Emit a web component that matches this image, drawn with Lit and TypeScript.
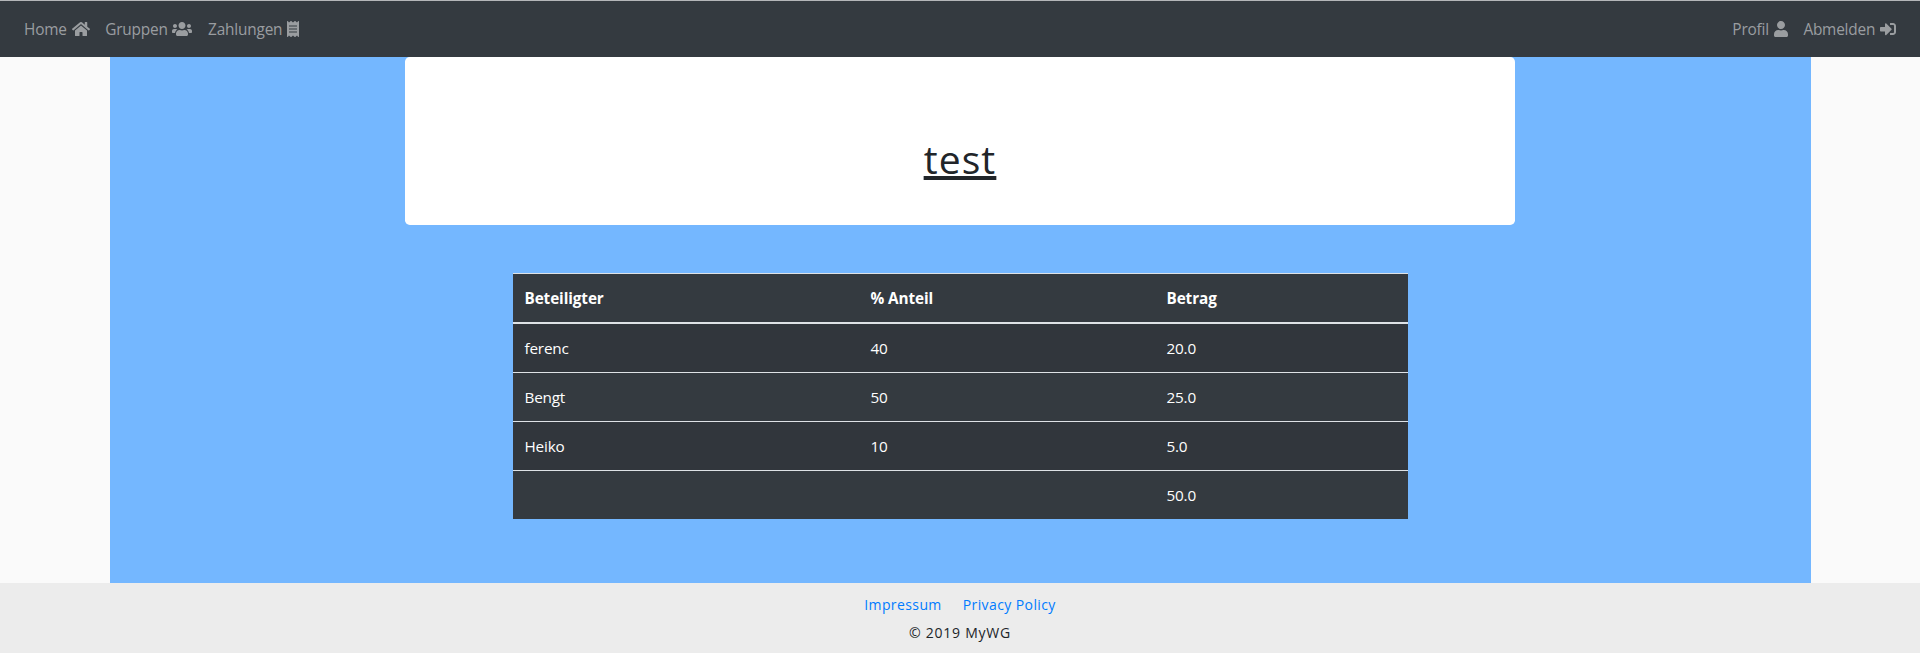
import { LitElement, html, css, svg } from "lit";
import { customElement } from "lit/decorators.js";

const ICONS: Record<string, { w: number; d: string }> = {
  home: {
    w: 576,
    d: "M280.37 148.26L96 300.11V464a16 16 0 0 0 16 16l112.06-.29a16 16 0 0 0 15.92-16V368a16 16 0 0 1 16-16h64a16 16 0 0 1 16 16v95.64a16 16 0 0 0 16 16.05L464 480a16 16 0 0 0 16-16V300L295.67 148.26a12.19 12.19 0 0 0-15.3 0zM571.6 251.47L488 182.56V44.05a12 12 0 0 0-12-12h-56a12 12 0 0 0-12 12v72.61L318.47 43a48 48 0 0 0-61 0L4.34 251.47a12 12 0 0 0-1.6 16.9l25.5 31A12 12 0 0 0 45.15 301l235.22-193.74a12.19 12.19 0 0 1 15.3 0L530.9 301a12 12 0 0 0 16.9-1.6l25.5-31a12 12 0 0 0-1.7-16.93z",
  },
  users: {
    w: 640,
    d: "M96 224c35.3 0 64-28.7 64-64s-28.7-64-64-64-64 28.7-64 64 28.7 64 64 64zm448 0c35.3 0 64-28.7 64-64s-28.7-64-64-64-64 28.7-64 64 28.7 64 64 64zm32 32h-64c-17.6 0-33.5 7.1-45.1 18.6 40.3 22.1 68.9 62 75.1 109.4h66c17.7 0 32-14.3 32-32v-32c0-35.3-28.7-64-64-64zm-256 0c61.9 0 112-50.1 112-112S381.9 32 320 32 208 82.1 208 144s50.1 112 112 112zm76.8 32h-8.3c-20.8 10-43.9 16-68.5 16s-47.6-6-68.5-16h-8.3C179.6 288 128 339.6 128 403.2V432c0 26.5 21.5 48 48 48h288c26.5 0 48-21.5 48-48v-28.8c0-63.6-51.6-115.2-115.2-115.2zm-223.7-13.4C161.5 263.1 145.6 256 128 256H64c-35.3 0-64 28.7-64 64v32c0 17.7 14.3 32 32 32h65.9c6.3-47.4 34.9-87.3 75.2-109.4z",
  },
  receipt: {
    w: 384,
    d: "M358.4 3.2L320 48 265.6 3.2a15.9 15.9 0 0 0-19.2 0L192 48 137.6 3.2a15.9 15.9 0 0 0-19.2 0L64 48 25.6 3.2C15-4.7 0 2.8 0 16v480c0 13.2 15 20.7 25.6 12.8L64 464l54.4 44.8a15.9 15.9 0 0 0 19.2 0L192 464l54.4 44.8a15.9 15.9 0 0 0 19.2 0L320 464l38.4 44.8c10.5 7.9 25.6.4 25.6-12.8V16c0-13.2-15-20.7-25.6-12.8zM320 360c0 4.4-3.6 8-8 8H72c-4.4 0-8-3.6-8-8v-16c0-4.4 3.6-8 8-8h240c4.4 0 8 3.6 8 8v16zm0-96c0 4.4-3.6 8-8 8H72c-4.4 0-8-3.6-8-8v-16c0-4.4 3.6-8 8-8h240c4.4 0 8 3.6 8 8v16zm0-96c0 4.4-3.6 8-8 8H72c-4.4 0-8-3.6-8-8v-16c0-4.4 3.6-8 8-8h240c4.4 0 8 3.6 8 8v16z",
  },
  user: {
    w: 448,
    d: "M224 256c70.7 0 128-57.3 128-128S294.7 0 224 0 96 57.3 96 128s57.3 128 128 128zm89.6 32h-16.7c-22.2 10.2-46.9 16-72.9 16s-50.6-5.8-72.9-16h-16.7C60.2 288 0 348.2 0 422.4V464c0 26.5 21.5 48 48 48h352c26.5 0 48-21.5 48-48v-41.6c0-74.2-60.2-134.4-134.4-134.4z",
  },
  signIn: {
    w: 512,
    d: "M416 448h-84c-6.6 0-12-5.4-12-12v-40c0-6.6 5.4-12 12-12h84c17.7 0 32-14.3 32-32V160c0-17.7-14.3-32-32-32h-84c-6.6 0-12-5.4-12-12V76c0-6.6 5.4-12 12-12h84c53 0 96 43 96 96v192c0 53-43 96-96 96zm-47-201L201 79c-15-15-41-4.5-41 17v96H24c-13.3 0-24 10.7-24 24v96c0 13.3 10.7 24 24 24h136v96c0 21.5 26 32 41 17l168-168c9.3-9.4 9.3-24.6 0-34z",
  },
};

const icon = (name: string) => {
  const i = ICONS[name];
  return html`<svg class="icon" width=${i.w / 32} height="16" viewBox="0 0 ${i.w} 512" aria-hidden="true">
    ${svg`<path d=${i.d}></path>`}
  </svg>`;
};

@customElement("wg-navbar")
class WgNavbar extends LitElement {
  static styles = css`
    :host { display: block; }
    .bar {
      box-sizing: border-box;
      height: 57px;
      padding: 0 24px;
      border-top: 1px solid #b4b6b9;
      background: #343a40;
      display: flex;
      justify-content: space-between;
      align-items: center;
      font: 15.4px/24px "Open Sans", sans-serif;
      letter-spacing: -0.2px;
    }
    .group { display: flex; gap: 15.7px; }
    .link {
      display: flex;
      align-items: center;
      gap: 4.8px;
      color: #9a9da0;
      text-decoration: none;
    }
    .label { padding-top: 2px; }
    .icon { fill: currentColor; display: block; }
  `;

  private link(label: string, name: string) {
    return html`<a class="link" href="#"><span class="label">${label}</span>${icon(name)}</a>`;
  }

  render() {
    return html`<nav class="bar">
      <div class="group">
        ${this.link("Home", "home")}${this.link("Gruppen", "users")}${this.link("Zahlungen", "receipt")}
      </div>
      <div class="group">${this.link("Profil", "user")}${this.link("Abmelden", "signIn")}</div>
    </nav>`;
  }
}

@customElement("wg-share-table")
class WgShareTable extends LitElement {
  static styles = css`
    :host { display: block; }
    .table {
      width: 100%;
      border-collapse: separate;
      border-spacing: 0;
      table-layout: fixed;
      background: #343a40;
      color: #fff;
      font: 15.3px/24px "Open Sans", sans-serif;
      letter-spacing: -0.2px;
    }
    .name { width: 346px; }
    .share { width: 296px; }
    .cell {
      box-sizing: border-box;
      height: 49px;
      padding: 0 11.5px;
      text-align: left;
      border-top: 1px solid #dee2e6;
    }
    .head { height: 51px; font-weight: 700; border-bottom: 2px solid #dee2e6; letter-spacing: -0.1px; }
    .first .cell { height: 48px; border-top: 0; }
    .row:nth-child(odd) { background: #31363c; }
  `;

  private rows = [
    ["ferenc", "40", "20.0"],
    ["Bengt", "50", "25.0"],
    ["Heiko", "10", "5.0"],
    ["", "", "50.0"],
  ];

  render() {
    return html`<table class="table">
      <thead>
        <tr>
          <th class="cell head name">Beteiligter</th>
          <th class="cell head share">% Anteil</th>
          <th class="cell head">Betrag</th>
        </tr>
      </thead>
      <tbody>
        ${this.rows.map(
          (r, i) => html`<tr class="row ${i === 0 ? "first" : ""}">
            ${r.map((c) => html`<td class="cell">${c}</td>`)}
          </tr>`
        )}
      </tbody>
    </table>`;
  }
}

@customElement("app-root")
class AppRoot extends LitElement {
  static styles = css`
    :host {
      display: flex;
      flex-direction: column;
      height: 653px;
      background: #fafafa;
      color: #212529;
      font-family: "Open Sans", sans-serif;
    }
    .main {
      box-sizing: border-box;
      width: 1701px;
      height: 526px;
      margin-left: 110px;
      background: #74b7ff;
      display: flex;
      flex-direction: column;
      align-items: center;
      gap: 48px;
    }
    .card {
      width: 1110px;
      height: 168px;
      margin-right: 1px;
      box-sizing: border-box;
      padding-top: 78px;
      border-radius: 4.8px;
      background: #fff;
      text-align: center;
    }
    .title {
      margin: 0;
      font-size: 39px;
      line-height: 48px;
      font-weight: 400;
      letter-spacing: 1.1px;
      text-decoration: underline;
      text-decoration-thickness: 4px;
      text-underline-offset: 2px;
      text-decoration-skip-ink: none;
    }
    .shares { width: 895px; }
    .footer {
      flex: 1;
      background: #ececec;
      display: flex;
      flex-direction: column;
      align-items: center;
      padding-top: 8px;
      font-size: 14px;
      line-height: 28px;
    }
    .links { display: flex; gap: 21px; letter-spacing: 0.4px; }
    .link { color: #007bff; text-decoration: none; }
    .copyright { letter-spacing: 0.75px; }
  `;

  render() {
    return html`
      <wg-navbar></wg-navbar>
      <main class="main">
        <section class="card"><h1 class="title">test</h1></section>
        <wg-share-table class="shares"></wg-share-table>
      </main>
      <footer class="footer">
        <div class="links">
          <a class="link" href="#">Impressum</a>
          <a class="link" href="#">Privacy Policy</a>
        </div>
        <div class="copyright">© 2019 MyWG</div>
      </footer>
    `;
  }
}
